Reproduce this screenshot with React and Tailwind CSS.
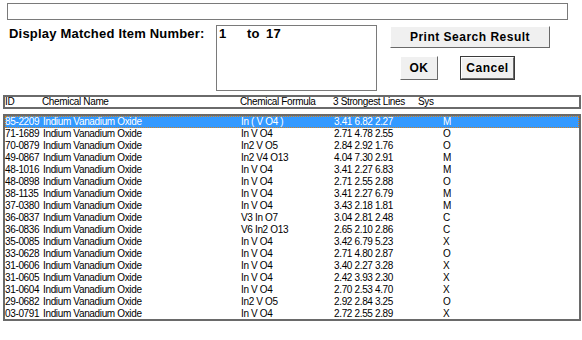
import React from "react";

const rows = [
  ["85-2209", "Indium Vanadium Oxide", "In ( V O4 )", "3.41 6.82 2.27", "M"],
  ["71-1689", "Indium Vanadium Oxide", "In V O4", "2.71 4.78 2.55", "O"],
  ["70-0879", "Indium Vanadium Oxide", "In2 V O5", "2.84 2.92 1.76", "O"],
  ["49-0867", "Indium Vanadium Oxide", "In2 V4 O13", "4.04 7.30 2.91", "M"],
  ["48-1016", "Indium Vanadium Oxide", "In V O4", "3.41 2.27 6.83", "M"],
  ["48-0898", "Indium Vanadium Oxide", "In V O4", "2.71 2.55 2.88", "O"],
  ["38-1135", "Indium Vanadium Oxide", "In V O4", "3.41 2.27 6.79", "M"],
  ["37-0380", "Indium Vanadium Oxide", "In V O4", "3.43 2.18 1.81", "M"],
  ["36-0837", "Indium Vanadium Oxide", "V3 In O7", "3.04 2.81 2.48", "C"],
  ["36-0836", "Indium Vanadium Oxide", "V6 In2 O13", "2.65 2.10 2.86", "C"],
  ["35-0085", "Indium Vanadium Oxide", "In V O4", "3.42 6.79 5.23", "X"],
  ["33-0628", "Indium Vanadium Oxide", "In V O4", "2.71 4.80 2.87", "O"],
  ["31-0606", "Indium Vanadium Oxide", "In V O4", "3.40 2.27 3.28", "X"],
  ["31-0605", "Indium Vanadium Oxide", "In V O4", "2.42 3.93 2.30", "X"],
  ["31-0604", "Indium Vanadium Oxide", "In V O4", "2.70 2.53 4.70", "X"],
  ["29-0682", "Indium Vanadium Oxide", "In2 V O5", "2.92 2.84 3.25", "O"],
  ["03-0791", "Indium Vanadium Oxide", "In V O4", "2.72 2.55 2.89", "X"],
];

export default function App() {
  return (
    <div className="w-[582px] h-[340px] bg-white font-['Liberation_Sans',Arial,sans-serif] text-black overflow-hidden">
      {/* top text field */}
      <div className="ml-[7px] mt-[3px] w-[561px] h-[17px] border border-[#7a7a7a] bg-white" />

      {/* middle row */}
      <div className="flex mt-[5px] h-[66px]">
        <div className="ml-[9px] pt-[1px] text-[13px] font-bold tracking-[0.2px] leading-[16px] w-[207px]">
          Display Matched Item Number:
        </div>
        <div className="w-[161px] h-[66px] border border-[#7a7a7a] bg-white pl-[2px] pt-0 text-[13px] font-bold leading-[16px] tracking-[0.2px] flex">
          <span className="w-[28px]">1</span>
          <span className="w-[19px]">to</span>
          <span>17</span>
        </div>
        <div className="ml-[13px] mt-[1px] flex flex-col">
          <button className="w-[160px] h-[22px] bg-[#f0f0f0] border border-t-white border-l-white border-r-[#696969] border-b-[#696969] text-[12px] font-bold tracking-[0.5px] leading-[14px] flex items-center justify-center">
            Print Search Result
          </button>
          <div className="flex mt-[8px]">
            <button className="ml-[10px] w-[38px] h-[24px] bg-[#f0f0f0] border border-t-white border-l-white border-r-[#696969] border-b-[#696969] text-[12px] font-bold tracking-[0.5px] leading-[14px] flex items-center justify-center">
              OK
            </button>
            <div className="ml-[22px] w-[55px] h-[24px] border border-[#3a3a3a] flex">
              <button className="flex-1 bg-[#f0f0f0] border border-t-white border-l-white border-r-[#696969] border-b-[#696969] text-[12px] font-bold tracking-[0.5px] leading-[14px] flex items-center justify-center">
                Cancel
              </button>
            </div>
          </div>
        </div>
      </div>

      {/* header bar */}
      <div className="ml-[3px] mt-[4px] w-[578px] h-[14px] border-2 border-[#6a6a6a] flex items-center text-[10px] tracking-[-0.35px] leading-[10px]">
        <span className="w-[37px] pl-[0px]">ID</span>
        <span className="w-[198px]">Chemical Name</span>
        <span className="w-[93px]">Chemical Formula</span>
        <span className="w-[85px]">3 Strongest Lines</span>
        <span>Sys</span>
      </div>

      {/* list */}
      <div className="ml-[3px] mt-[5px] w-[578px] h-[207px] border-2 border-[#6a6a6a] pt-0 text-[10px] tracking-[-0.35px] leading-[12px]">
        {rows.map((r, i) => {
          const sel = i === 0;
          return (
            <div
              key={r[0]}
              className={
                sel
                  ? "flex h-[12px] bg-[#3399ff] text-white outline outline-1 outline-dotted outline-[#d08020] -outline-offset-1"
                  : "flex h-[12px]"
              }
            >
              <span className="w-[38px] pl-[0px]">{r[0]}</span>
              <span className="w-[198px]">{r[1]}</span>
              <span className="w-[93px]">{r[2]}</span>
              <span className="w-[109px]">{r[3]}</span>
              <span>{r[4]}</span>
            </div>
          );
        })}
      </div>
    </div>
  );
}
